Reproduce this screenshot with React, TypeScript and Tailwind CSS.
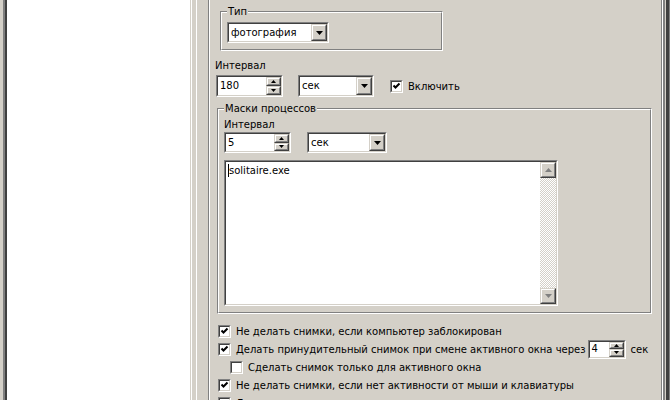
import React from 'react'

const font = "font-['DejaVu_Sans',sans-serif] text-[10px] text-black"

function Sunken({ className = '', children }: { className?: string; children?: React.ReactNode }) {
  return (
    <div className={`border border-t-[#808080] border-l-[#808080] border-r-white border-b-white ${className}`}>
      <div className="flex h-full w-full border border-t-[#404040] border-l-[#404040] border-r-[#d4d0c8] border-b-[#d4d0c8] bg-white">
        {children}
      </div>
    </div>
  )
}

function Raised({ className = '', children }: { className?: string; children?: React.ReactNode }) {
  return (
    <div className={`border border-t-[#d4d0c8] border-l-[#d4d0c8] border-r-[#404040] border-b-[#404040] ${className}`}>
      <div className="flex h-full w-full items-center justify-center border border-t-white border-l-white border-r-[#808080] border-b-[#808080] bg-[#d4d0c8]">
        {children}
      </div>
    </div>
  )
}

function Arrow({ up = false, w = 7, h = 4, color = '#000' }: { up?: boolean; w?: number; h?: number; color?: string }) {
  return (
    <svg width={w} height={h} viewBox={`0 0 ${w} ${h}`} className="block">
      <polygon points={up ? `0,${h} ${w},${h} ${w / 2},0` : `0,0 ${w},0 ${w / 2},${h}`} fill={color} />
    </svg>
  )
}

function Combo({ value, className }: { value: string; className: string }) {
  return (
    <Sunken className={className}>
      <span className="flex flex-1 items-center pl-[2px] leading-none">{value}</span>
      <Raised className="h-full w-[16px]">
        <Arrow />
      </Raised>
    </Sunken>
  )
}

function Spin({ value, className }: { value: string; className: string }) {
  return (
    <Sunken className={className}>
      <span className="flex flex-1 items-center pl-[2px] leading-none">{value}</span>
      <div className="flex h-full w-[15px] flex-col">
        <Raised className="flex-1">
          <Arrow up w={5} h={3} />
        </Raised>
        <Raised className="flex-1">
          <Arrow w={5} h={3} />
        </Raised>
      </div>
    </Sunken>
  )
}

function Check({ checked }: { checked: boolean }) {
  return (
    <Sunken className="h-[13px] w-[13px] shrink-0">
      {checked && (
        <svg width="9" height="9" viewBox="0 0 9 9" className="block">
          <polyline points="1.5,3.5 3.5,5.5 7.5,1.5" fill="none" stroke="#000" strokeWidth="2" />
        </svg>
      )}
    </Sunken>
  )
}

function Group({ label, className = '', children }: { label: string; className?: string; children?: React.ReactNode }) {
  return (
    <div className={`relative border border-t-[#808080] border-l-[#808080] border-r-white border-b-white ${className}`}>
      <div className="h-full w-full border border-t-white border-l-white border-r-[#808080] border-b-[#808080]">
        {children}
      </div>
      <span className="absolute -top-[7px] left-[6px] bg-[#d4d0c8] px-[1px] leading-[13px]">{label}</span>
    </div>
  )
}

function CheckRow({ checked, label, indent = false, children }: { checked: boolean; label: string; indent?: boolean; children?: React.ReactNode }) {
  return (
    <div className={`flex h-[18px] items-center ${indent ? 'pl-[20px]' : 'pl-[8px]'}`}>
      <Check checked={checked} />
      <span className="ml-[5px] whitespace-nowrap">{label}</span>
      {children}
    </div>
  )
}

export default function App() {
  return (
    <div className={`flex h-[400px] w-[670px] overflow-hidden bg-[#d4d0c8] ${font}`}>
      {/* left list */}
      <div className="w-[192px] shrink-0 pl-[3px]">
        <div className="h-[420px] border-l-2 border-r border-l-[#808080] border-r-white">
          <div className="h-full border-l-2 border-r border-l-[#404040] border-r-[#d4d0c8] bg-white" />
        </div>
      </div>

      <div className="ml-[4px] w-px shrink-0 bg-white" />
      <div className="w-[11px] shrink-0" />

      {/* outer group (scrolled, top is out of view) */}
      <div className="flex w-[455px] shrink-0 border-l border-r border-l-[#808080] border-r-white">
        <div className="flex-1 border-l border-r border-l-white border-r-[#808080]">
          <Group label="Тип" className="ml-[10px] mt-[11px] h-[40px] w-[223px]">
            <div className="pl-[5px] pt-[9px]">
              <Combo value="фотография" className="h-[21px] w-[102px]" />
            </div>
          </Group>

          <div className="ml-[5px] mt-[8px] leading-[13px]">Интервал</div>
          <div className="mt-[3px] flex items-center pl-[6px]">
            <Spin value="180" className="h-[22px] w-[67px]" />
            <Combo value="сек" className="ml-[15px] h-[22px] w-[76px]" />
            <div className="ml-[16px] flex items-center">
              <Check checked />
              <span className="ml-[5px]">Включить</span>
            </div>
          </div>

          <Group label="Маски процессов" className="ml-[7px] mt-[11px] h-[206px] w-[435px]">
            <div className="pl-[5px] pt-[8px]">
              <div className="leading-[13px]">Интервал</div>
              <div className="mt-px flex items-center">
                <Spin value="5" className="h-[21px] w-[67px]" />
                <Combo value="сек" className="ml-[16px] h-[21px] w-[80px]" />
              </div>
              <Sunken className="mt-[7px] h-[146px] w-[334px]">
                <div className="relative flex-1 pl-[3px] pt-[2px] leading-[13px]">
                  <span className="absolute left-[2px] top-[2px] h-[13px] w-px bg-black" />
                  solitaire.exe
                </div>
                <div className="flex h-full w-[16px] flex-col">
                  <Raised className="h-[16px] w-[16px]">
                    <Arrow up w={7} h={4} color="#808080" />
                  </Raised>
                  <div className="flex-1 bg-[repeating-conic-gradient(#d4d0c8_0%_25%,#ffffff_0%_50%)] bg-[length:2px_2px]" />
                  <Raised className="h-[16px] w-[16px]">
                    <Arrow w={7} h={4} color="#808080" />
                  </Raised>
                </div>
              </Sunken>
            </div>
          </Group>

          <div className="mt-[8px]">
            <CheckRow checked label="Не делать снимки, если компьютер заблокирован" />
            <CheckRow checked label="Делать принудительный снимок при смене активного окна через">
              <Spin value="4" className="ml-[2px] h-[19px] w-[38px]" />
              <span className="ml-[5px]">сек</span>
            </CheckRow>
            <CheckRow checked={false} indent label="Сделать снимок только для активного окна" />
            <CheckRow checked label="Не делать снимки, если нет активности от мыши и клавиатуры" />
            <CheckRow checked={false} label="Делать снимки только основного дисплея" />
          </div>
        </div>
      </div>

      {/* frame right edge */}
      <div className="flex shrink-0">
        <div className="w-[2px] bg-[#808080]" />
        <div className="w-px bg-[#d4d0c8]" />
        <div className="w-[3px] bg-[#404040]" />
        <div className="w-px bg-[#808080]" />
      </div>
    </div>
  )
}
